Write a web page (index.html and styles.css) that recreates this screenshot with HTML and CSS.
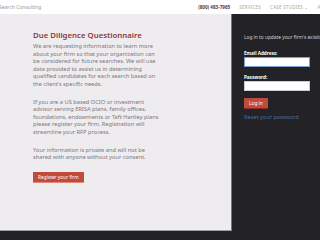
FILE: index.html
```html
<!DOCTYPE html>
<html lang="en">
<head>
  <meta charset="UTF-8">
  <title>Due Diligence Questionnaire</title>
  <link rel="stylesheet" href="styles.css">
</head>
<body>

  <header class="topbar">
    <div class="brand">Search Consulting</div>
    <nav class="nav">
      <span class="phone">(800) 483-7965</span>
      <a href="#">SERVICES</a>
      <a href="#">CASE STUDIES &#8964;</a>
      <a href="#">ABOUT</a>
    </nav>
  </header>

  <main class="page">
    <section class="intro">
      <h2>Due Diligence Questionnaire</h2>
      <p>We are requesting information to learn more<br>
        about your firm so that your organization can<br>
        be considered for future searches. We will use<br>
        data provided to assist us in determining<br>
        qualified candidates for each search based on<br>
        the client's specific needs.</p>
      <p>If you are a US based OCIO or investment<br>
        advisor serving ERISA plans, family offices,<br>
        foundations, endowments or Taft Hartley plans<br>
        please register your firm. Registration will<br>
        streamline your RFP process.</p>
      <p>Your information is private and will not be<br>
        shared with anyone without your consent.</p>
      <a class="btn btn-register" href="#">Register your firm</a>
    </section>

    <aside class="login">
      <p class="login-note">Log in to update your firm's existing profile.</p>
      <form class="login-form">
        <label for="email">Email Address:</label>
        <input type="email" id="email" class="focused">
        <label for="pwd">Password:</label>
        <input type="password" id="pwd">
        <button type="submit" class="btn btn-small">Log in</button>
      </form>
      <a class="reset" href="#">Reset your password</a>
    </aside>
  </main>

</body>
</html>
```

FILE: styles.css
```css
* {
  box-sizing: border-box;
  margin: 0;
  padding: 0;
}

body {
  width: 320px;
  height: 240px;
  overflow: hidden;
  background: #232226;
  font-family: 'Noto Sans', Arial, sans-serif;
}

.topbar {
  height: 14px;
  background: #fff;
  display: flex;
  align-items: center;
  justify-content: space-between;
  white-space: nowrap;
  overflow: hidden;
}

.brand {
  font-size: 5px;
  color: #9a9a9a;
  margin-left: -1px;
}

.nav {
  display: flex;
  gap: 9px;
  font-size: 4.6px;
  margin-right: -14px;
}

.nav a {
  color: #a8a8a8;
  text-decoration: none;
  letter-spacing: 0.2px;
}

.phone {
  color: #444;
  font-weight: 700;
}

.page {
  display: flex;
}

.intro {
  flex-shrink: 0;
  width: 232px;
  height: 217px;
  background: #efecef;
  border-right: 1px solid #77767a;
  border-bottom: 1px solid #a09fa3;
  padding: 17px 0 0 33px;
}

.intro h2 {
  font-size: 7.8px;
  line-height: 9px;
  color: #8b3b32;
  font-weight: 600;
  margin-bottom: 3px;
  white-space: nowrap;
}

.intro p {
  font-size: 5.7px;
  line-height: 7.6px;
  color: #7a787c;
  white-space: nowrap;
  margin-bottom: 10px;
}

.btn {
  display: inline-block;
  background: #c04a3b;
  color: #fff;
  font-size: 4.8px;
  text-decoration: none;
  border: none;
  border-bottom: 1px solid #e08a7e;
  padding: 2px 4px;
  line-height: 6px;
}

.btn-register {
  display: block;
  width: fit-content;
  padding: 2px 5px;
}

.login {
  flex: 1;
  min-width: 0;
  overflow: hidden;
  padding: 20px 0 0 12px;
}

.login-note {
  font-size: 4.8px;
  color: #cfcfd2;
  white-space: nowrap;
  margin-bottom: 10px;
}

.login-form {
  display: flex;
  flex-direction: column;
  align-items: flex-start;
}

.login-form label {
  font-size: 4.6px;
  font-weight: 700;
  color: #fff;
  margin-bottom: 1px;
}

.login-form input {
  width: 66px;
  height: 10px;
  background: #fff;
  border: 1px solid #ccc;
  margin-bottom: 7px;
}

.login-form input.focused {
  border-color: #7aa0d0;
}

.btn-small {
  margin-top: 0;
  padding: 2px 5px;
  border-bottom: 1px solid #8a2a22;
  font-family: inherit;
}

.reset {
  display: block;
  margin-top: 4px;
  font-size: 5.6px;
  color: #4b6c9c;
  text-decoration: none;
}
```
